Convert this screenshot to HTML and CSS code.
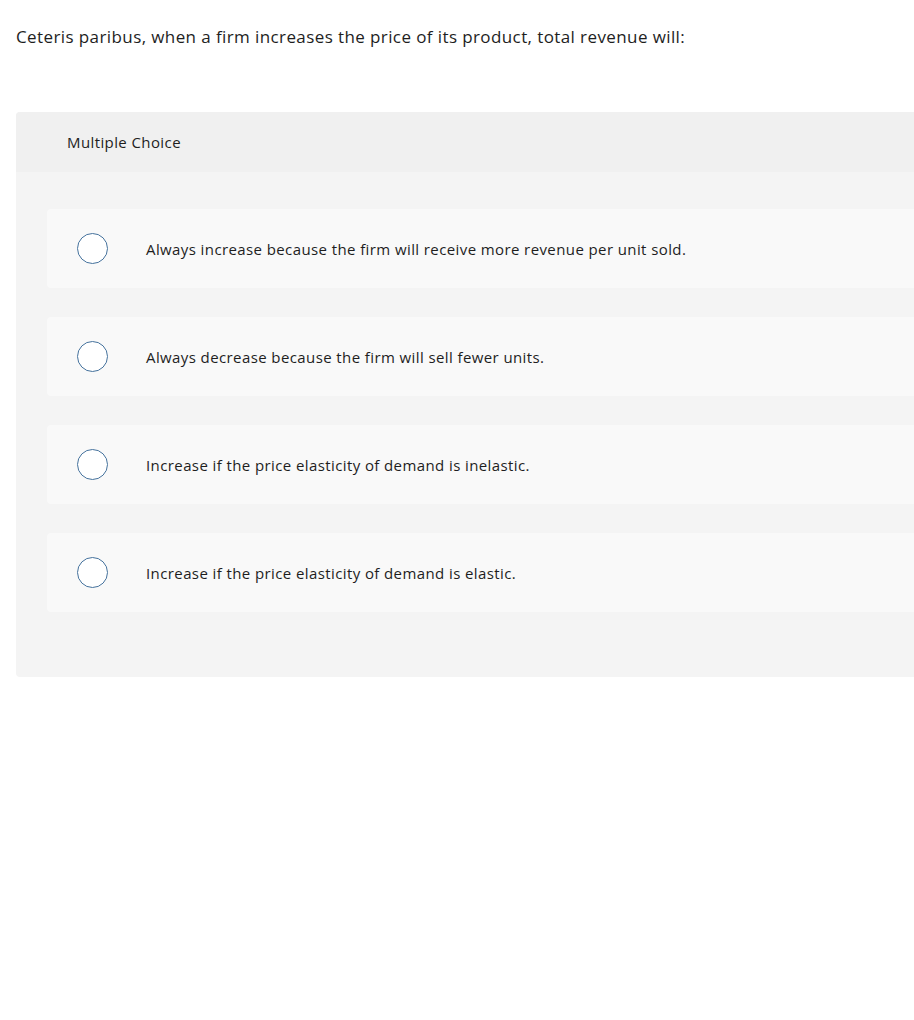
FILE: index.html
```html
<!DOCTYPE html>
<html>
<head>
<meta charset="utf-8">
<link rel="stylesheet" href="styles.css">
</head>
<body>
<div class="page">
  <p class="question">Ceteris paribus, when a firm increases the price of its product, total revenue will:</p>
  <div class="card">
    <div class="card-header">Multiple Choice</div>
    <div class="card-body">
      <div class="option"><span class="radio"></span><span class="label">Always increase because the firm will receive more revenue per unit sold.</span></div>
      <div class="option"><span class="radio"></span><span class="label">Always decrease because the firm will sell fewer units.</span></div>
      <div class="option"><span class="radio"></span><span class="label">Increase if the price elasticity of demand is inelastic.</span></div>
      <div class="option"><span class="radio"></span><span class="label">Increase if the price elasticity of demand is elastic.</span></div>
    </div>
  </div>
</div>
</body>
</html>
```
FILE: styles.css
```css
html, body {
  margin: 0;
  padding: 0;
  background: #ffffff;
}
body {
  font-family: "Open Sans", "Liberation Sans", sans-serif;
  color: #1e1e1e;
  font-variant-ligatures: none;
  letter-spacing: 0.4px;
}
.page {
  padding: 0 0 0 16px;
}
.question {
  margin: 0;
  padding-top: 25px;
  font-size: 17px;
  line-height: 24px;
  height: 87px;
}
.card {
  background: #f4f4f4;
  border-radius: 4px 0 0 4px;
  padding-bottom: 65px;
}
.card-header {
  height: 60px;
  background: #f0f0f0;
  border-radius: 4px 0 0 0;
  padding-left: 51px;
  display: flex;
  align-items: center;
  font-size: 15px;
}
.card-body {
  padding: 37px 0 0 31px;
  display: flex;
  flex-direction: column;
  gap: 29px;
}
.option {
  height: 79px;
  background: #f9f9f9;
  border-radius: 4px 0 0 4px;
  display: flex;
  align-items: center;
  padding-left: 30px;
}
.radio {
  width: 29px;
  height: 29px;
  border: 1.5px solid #45729d;
  border-radius: 50%;
  background: #ffffff;
  flex: none;
}
.label {
  margin-left: 38px;
  font-size: 15px;
}
```
